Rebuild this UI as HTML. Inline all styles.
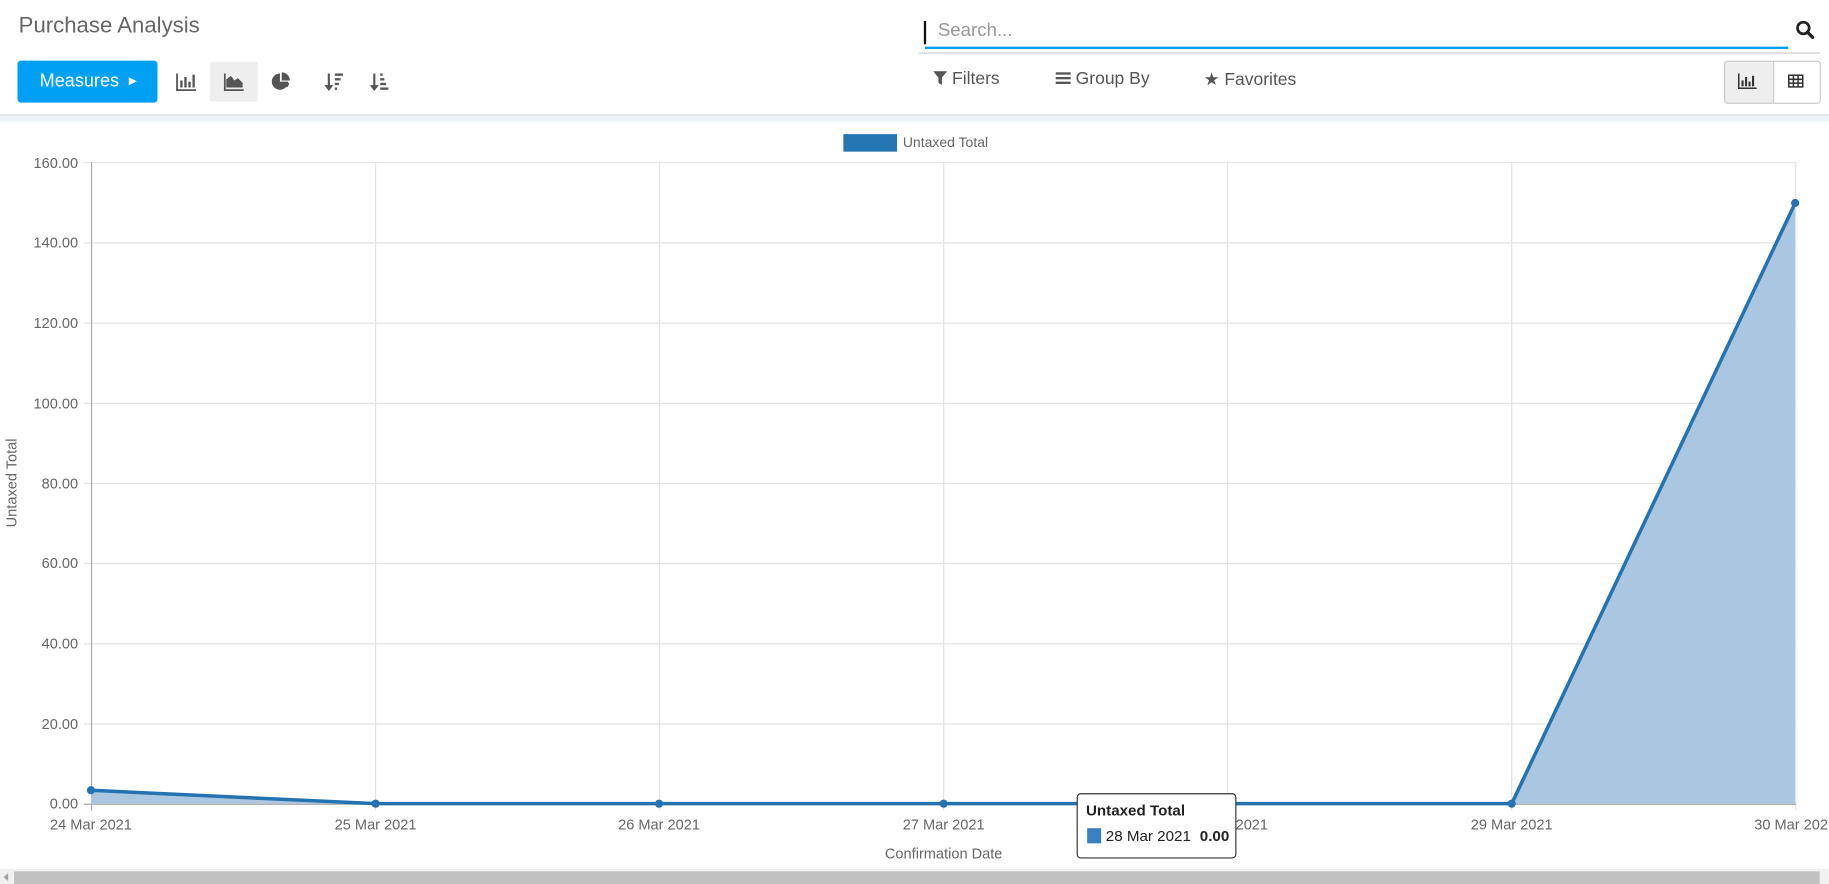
<!DOCTYPE html>
<html><head><meta charset="utf-8"><style>
html,body{margin:0;padding:0;background:#fff;overflow:hidden;width:1829px;height:884px}
#w{position:absolute;left:0;top:0;width:1568px;height:758px;transform:scale(1.16645);transform-origin:0 0;font-family:"Liberation Sans",sans-serif}
.a{position:absolute}
.t{color:#555;font-size:15px}
</style></head><body><div id="w">
<div class="a" style="left:16px;top:12px;font-size:19px;color:#666">Purchase Analysis</div>
<div class="a" style="left:15px;top:52px;width:120px;height:36px;background:#00a0f5;border-radius:3px;color:#fff;font-size:15.5px;line-height:36px;text-indent:19px">Measures <span style="font-size:9px;margin-left:4px;position:relative;top:-2px">&#9654;</span></div>
<div class="a" style="left:180px;top:53px;width:41px;height:34px;background:#eee;border-radius:2px"></div>
<svg class="a" style="left:150px;top:60px" width="200" height="22" viewBox="0 0 200 22">
<g fill="#555">
<rect x="1" y="3" width="1.5" height="15"/><rect x="1" y="16.5" width="17" height="1.5"/>
<rect x="4.5" y="9" width="2" height="6"/><rect x="8" y="6" width="2" height="9"/><rect x="11.5" y="10" width="2" height="5"/><rect x="15" y="4" width="2" height="11"/>
<rect x="42" y="3" width="1.5" height="15"/><rect x="42" y="16.5" width="17" height="1.5"/>
<path d="M44 15 L44 8 L48 5 L51 9 L54 7 L58 11 L58 15Z"/>
<path d="M90 3 A7 7 0 1 0 97 10 L90 10Z"/><path d="M91.5 2 A7 7 0 0 1 98.5 9 L91.5 9Z"/><path d="M91.5 11 L98 11 A7 7 0 0 1 96 15Z"/>
<rect x="131" y="3" width="1.8" height="12"/><path d="M128 13 L135.8 13 L131.9 18Z"/>
<rect x="137" y="3" width="7" height="2"/><rect x="137" y="7" width="5" height="2"/><rect x="137" y="11" width="3.5" height="2"/><rect x="137" y="15" width="2" height="2"/>
<rect x="170" y="3" width="1.8" height="12"/><path d="M167 13 L174.8 13 L170.9 18Z"/>
<rect x="176" y="3" width="2" height="2"/><rect x="176" y="7" width="3.5" height="2"/><rect x="176" y="11" width="5" height="2"/><rect x="176" y="15" width="7" height="2"/>
</g></svg>
<div class="a" style="left:792px;top:18px;width:2px;height:20px;background:#111"></div>
<div class="a" style="left:804px;top:18px;font-size:16px;color:#999">Search...</div>
<div class="a" style="left:793px;top:40px;width:740px;height:2px;background:#00a0f0"></div>
<svg class="a" style="left:1539px;top:17px" width="17" height="17" viewBox="0 0 17 17"><circle cx="7" cy="7" r="5" fill="none" stroke="#222" stroke-width="2.3"/><path d="M10.5 10.5 L15 15" stroke="#222" stroke-width="2.8" stroke-linecap="round"/></svg>
<div class="a" style="left:788px;top:45px;width:772px;height:1px;background:#ccc"></div>
<div class="a t" style="left:800px;top:59px"><svg width="12" height="12" viewBox="0 0 12 12" style="vertical-align:-1px"><path d="M0 0 H12 L7.5 5.5 V12 L4.5 10 V5.5Z" fill="#555"/></svg> Filters</div>
<div class="a t" style="left:905px;top:59px"><svg width="13" height="12" viewBox="0 0 13 12" style="vertical-align:-1px"><rect y="1" width="13" height="2" fill="#555"/><rect y="5" width="13" height="2" fill="#555"/><rect y="9" width="13" height="2" fill="#555"/></svg> Group By</div>
<div class="a t" style="left:1032px;top:59px"><span style="font-size:15px">&#9733;</span> Favorites</div>
<div class="a" style="left:1478px;top:52px;width:41px;height:35px;background:#eee;border:1px solid #ccc;border-radius:3px 0 0 3px"></div>
<div class="a" style="left:1520px;top:52px;width:39px;height:35px;background:#fff;border:1px solid #ccc;border-radius:0 3px 3px 0"></div>
<svg class="a" style="left:1490px;top:62px" width="60" height="16" viewBox="0 0 60 16"><g fill="#333">
<rect x="0" y="1" width="1.3" height="13"/><rect x="0" y="13" width="16" height="1.3"/><rect x="3" y="7" width="1.8" height="5"/><rect x="6" y="4" width="1.8" height="8"/><rect x="9" y="8" width="1.8" height="4"/><rect x="12" y="3" width="1.8" height="9"/></g>
<g fill="none" stroke="#333" stroke-width="1.3"><rect x="43.5" y="2.5" width="12" height="10"/><path d="M43.5 6 H55.5 M43.5 9.3 H55.5 M47.5 2.5 V12.5 M51.5 2.5 V12.5"/></g></svg>
<div class="a" style="left:0;top:98px;width:1568px;height:1px;background:#d4d8dc"></div>
<div class="a" style="left:0;top:99px;width:1568px;height:5px;background:#eef3f8"></div>
<svg class="a" style="left:0;top:0" width="1568" height="758" viewBox="0 0 1568 758" font-family="Liberation Sans, sans-serif">
<rect x="723" y="115" width="46" height="15" fill="#2475b2"/>
<text x="774" y="126" font-size="12" fill="#666">Untaxed Total</text>
<g stroke="#e3e3e3" stroke-width="1">
<path d="M72 139.5H1540M72 208.2H1540M72 277H1540M72 345.7H1540M72 414.5H1540M72 483.2H1540M72 552H1540M72 620.7H1540"/>
<path d="M322 139V695M565.5 139V695M809 139V695M1052.5 139V695M1296 139V695M1539.5 139V695"/>
</g>
<path d="M78.5 139V689.5M72 689.5H1540M78.5 689V695" stroke="#aaa" stroke-width="1"/>
<g font-size="12.5" fill="#666" text-anchor="end">
<text x="67" y="144">160.00</text><text x="67" y="212">140.00</text><text x="67" y="281">120.00</text><text x="67" y="350">100.00</text><text x="67" y="419">80.00</text><text x="67" y="487">60.00</text><text x="67" y="556">40.00</text><text x="67" y="625">20.00</text><text x="67" y="693">0.00</text>
</g>
<g font-size="12.5" fill="#666" text-anchor="middle">
<text x="78" y="711">24 Mar 2021</text><text x="322" y="711">25 Mar 2021</text><text x="565" y="711">26 Mar 2021</text><text x="809" y="711">27 Mar 2021</text><text x="1052" y="711">28 Mar 2021</text><text x="1296" y="711">29 Mar 2021</text><text x="1539" y="711">30 Mar 2021</text>
<text x="809" y="736">Confirmation Date</text>
<text transform="translate(14 414) rotate(-90)">Untaxed Total</text>
</g>
<path d="M78 677.5 L322 689 L1296 689 L1539 174 L1539 689 L78 689Z" fill="#aac6e1"/>
<path d="M78 677.5 L322 689 L1296 689 L1539 174" fill="none" stroke="#2472b0" stroke-width="3" stroke-linejoin="round"/>
<g fill="#2472b0"><circle cx="78" cy="677.5" r="3.5"/><circle cx="322" cy="689" r="3.5"/><circle cx="565" cy="689" r="3.5"/><circle cx="809" cy="689" r="3.5"/><circle cx="1052" cy="689" r="3.5"/><circle cx="1296" cy="689" r="3.5"/><circle cx="1539" cy="174" r="3.5"/></g>
<rect x="923.5" y="680.5" width="136" height="55" rx="3" fill="#fff" stroke="#333"/>
<text x="931" y="699" font-size="13" font-weight="bold" fill="#222">Untaxed Total</text>
<rect x="932" y="710" width="12" height="13" fill="#3a7fbf"/>
<text x="948" y="721" font-size="13" fill="#222">28 Mar 2021 <tspan font-weight="bold" dx="4">0.00</tspan></text>
<rect x="0" y="745" width="1568" height="13" fill="#f1f1f1"/>
<rect x="12" y="747" width="1548" height="11" fill="#c1c1c1"/>
<path d="M3 752 L7 748.5 L7 755.5Z" fill="#a3a3a3"/>
</svg>
</div></body></html>
